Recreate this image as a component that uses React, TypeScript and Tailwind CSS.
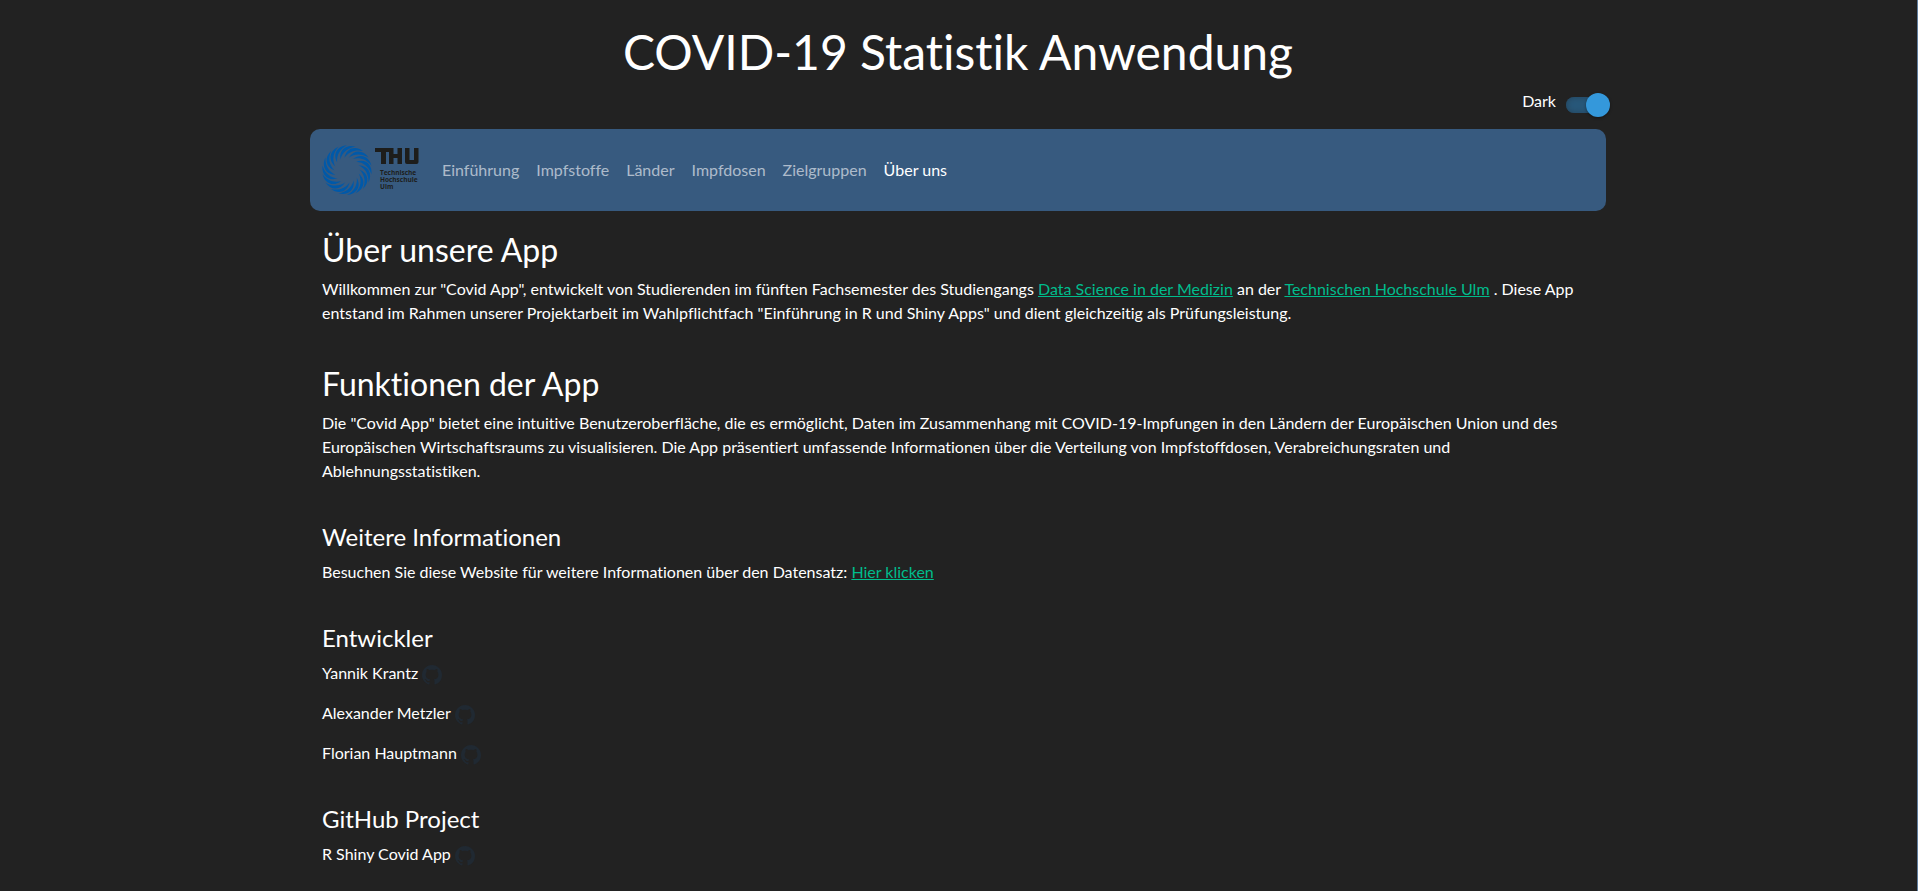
import { useState } from "react";
import { BsGithub } from "react-icons/bs";

const NAV_ITEMS = ["Einführung", "Impfstoffe", "Länder", "Impfdosen", "Zielgruppen", "Über uns"];
const DEVELOPERS = ["Yannik Krantz", "Alexander Metzler", "Florian Hauptmann"];
const BLADES = Array.from({ length: 18 }, (_, i) => i * 20);

function Logo() {
  return (
    <svg width="100" height="56" viewBox="0 0 100 56" role="img" aria-label="Technische Hochschule Ulm">
      <g fill="#0059a9">
        {BLADES.map((angle) => (
          <path
            key={angle}
            transform={`rotate(${angle} 25 28)`}
            d="M41 9C34 3.6 24.5 5.5 22.4 15.8C26.5 9.8 33 7.2 41 9Z"
          />
        ))}
      </g>
      <path
        fill="#1d1d1b"
        d="M53 6H71.5V12H75.5V6H80V22H75.5V16H71.5V22H67V10H64V22H59V10H53ZM83 6H87.5V18H92V6H96.5V20Q96.5 22 94.5 22H85Q83 22 83 20Z"
      />
      <g fill="#1d1d1b" fontFamily="Open Sans, sans-serif" fontSize="6.5" fontWeight="700">
        <text x="58" y="33">Technische</text>
        <text x="58" y="40">Hochschule</text>
        <text x="58" y="47">Ulm</text>
      </g>
    </svg>
  );
}

function GithubLink({ label }: { label: string }) {
  return (
    <a href="#github" aria-label={`GitHub: ${label}`} className="inline-block align-middle text-[#202932]">
      <BsGithub className="size-5" />
    </a>
  );
}

function TextLink({ children }: { children: string }) {
  return (
    <a href="#mehr" className="text-[#00bc8c] underline">
      {children}
    </a>
  );
}

export default function App() {
  const [dark, setDark] = useState(true);
  return (
    <div className="min-h-screen border-r border-[#5f7d9e] bg-[#222222] pr-px font-['Lato',sans-serif] text-base text-white [font-variant-ligatures:no-common-ligatures]">
      <div className="mx-auto max-w-[1320px] px-3 pt-6">
        <h1 className="text-center text-5xl leading-[56px]">COVID-19 Statistik Anwendung</h1>
        <div className="-mr-1 flex h-[49px] justify-end pt-2">
          <label className="flex h-[26px] items-center gap-[10px]">
            <span>Dark</span>
            <span className="relative mt-2 flex h-6 w-11 items-center">
              <input
                type="checkbox"
                role="switch"
                checked={dark}
                onChange={(e) => setDark(e.target.checked)}
                className="peer absolute inset-0 z-10 cursor-pointer opacity-0"
              />
              <span className="h-4 w-10 rounded-full bg-[#28587a] shadow-[inset_0_0_6px_#24435a]" />
              <span className="absolute left-0 size-6 rounded-full bg-[#3498db] shadow-[0_1px_3px_#00000066] peer-checked:left-5" />
            </span>
          </label>
        </div>
        <nav className="flex h-[82px] items-center rounded-[10px] bg-[#375a7f] px-3">
          <a href="#start" className="mr-3">
            <Logo />
          </a>
          <ul className="flex gap-px">
            {NAV_ITEMS.map((item) => (
              <li key={item}>
                <a
                  href="#nav"
                  className={item === "Über uns" ? "block p-2 text-white" : "block p-2 text-white/60"}
                >
                  {item}
                </a>
              </li>
            ))}
          </ul>
        </nav>
        <main className="px-3 pt-5">
          <section className="mb-10">
            <h2 className="mb-2 text-[32px] leading-[38px]">Über unsere App</h2>
            <p>
              Willkommen zur "Covid App", entwickelt von Studierenden im fünften Fachsemester des Studiengangs{" "}
              <TextLink>Data Science in der Medizin</TextLink> an der <TextLink>Technischen Hochschule Ulm</TextLink> .
              Diese App entstand im Rahmen unserer Projektarbeit im Wahlpflichtfach "Einführung in R und Shiny Apps" und
              dient gleichzeitig als Prüfungsleistung.
            </p>
          </section>
          <section className="mb-10">
            <h2 className="mb-2 text-[32px] leading-[38px]">Funktionen der App</h2>
            <p>
              Die "Covid App" bietet eine intuitive Benutzeroberfläche, die es ermöglicht, Daten im Zusammenhang mit
              COVID-19-Impfungen in den Ländern der Europäischen Union und des Europäischen Wirtschaftsraums zu
              visualisieren. Die App präsentiert umfassende Informationen über die Verteilung von Impfstoffdosen,
              Verabreichungsraten und Ablehnungsstatistiken.
            </p>
          </section>
          <section className="mb-10">
            <h3 className="mb-[9px] text-2xl leading-7">Weitere Informationen</h3>
            <p>
              Besuchen Sie diese Website für weitere Informationen über den Datensatz: <TextLink>Hier klicken</TextLink>
            </p>
          </section>
          <section className="mb-10">
            <h3 className="mb-[9px] text-2xl leading-7">Entwickler</h3>
            <ul className="flex flex-col gap-4">
              {DEVELOPERS.map((name) => (
                <li key={name} className="h-6">
                  {name} <GithubLink label={name} />
                </li>
              ))}
            </ul>
          </section>
          <section>
            <h3 className="mb-[9px] text-2xl leading-7">GitHub Project</h3>
            <p className="h-6">
              R Shiny Covid App <GithubLink label="R Shiny Covid App" />
            </p>
          </section>
        </main>
      </div>
    </div>
  );
}
